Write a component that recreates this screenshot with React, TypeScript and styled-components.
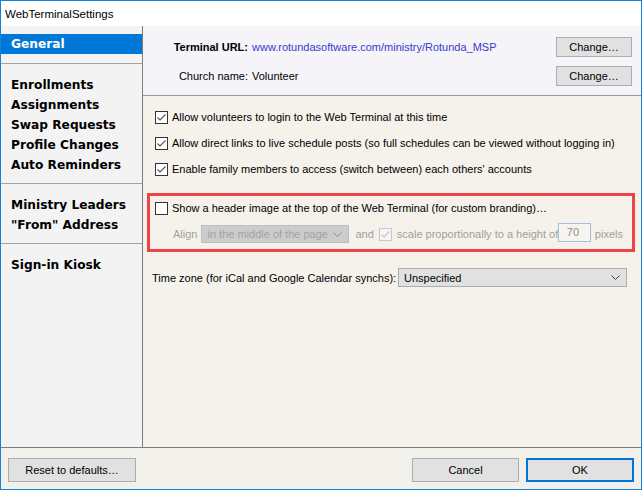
import React from 'react';
import styled, { createGlobalStyle } from 'styled-components';

const Global = createGlobalStyle`
  html, body { margin: 0; padding: 0; background: #ffffff; }
  body { font-family: "Liberation Sans", Arial, sans-serif; font-size: 11px; color: #000; }
  * { box-sizing: border-box; }
`;

const Window = styled.div`
  width: 642px;
  height: 490px;
  border: 1px solid #1a7fd6;
  display: flex;
  flex-direction: column;
  background: #f3f1ec;
`;

const TitleBar = styled.div`
  height: 25px;
  flex: none;
  background: #ffffff;
  display: flex;
  align-items: center;
  padding-left: 4px;
  font-size: 11.5px;
  color: #000;
`;

const Body = styled.div`
  height: 422px;
  flex: none;
  display: flex;
  border-bottom: 1px solid #7d7d7d;
`;

const Sidebar = styled.nav`
  width: 142px;
  flex: none;
  background: #f3f3f3;
  border-right: 1px solid #7d7d7d;
  display: flex;
  flex-direction: column;
`;

const NavGroup = styled.div<{ $first?: boolean; $last?: boolean }>`
  padding: ${p => (p.$first ? '8px 0 9px' : '11px 0 8px')};
  border-bottom: ${p => (p.$last ? 'none' : '1px solid #a3a3a3')};
`;

const NavItem = styled.div<{ $selected?: boolean }>`
  height: 20px;
  line-height: 21px;
  padding-left: 10px;
  font-family: "DejaVu Sans", Verdana, sans-serif;
  font-weight: bold;
  font-size: 12.2px;
  white-space: nowrap;
  background: ${p => (p.$selected ? '#0078d7' : 'transparent')};
  color: ${p => (p.$selected ? '#ffffff' : '#000000')};
`;

const Main = styled.main`
  flex: 1;
  display: flex;
  flex-direction: column;
  min-width: 0;
`;

const InfoSection = styled.section`
  height: 70px;
  flex: none;
  background: #f4f4f9;
  border-bottom: 1px solid #9a9a9a;
  padding: 11px 9px 0 0;
  display: grid;
  grid-template-columns: 105px 1fr 76px;
  grid-auto-rows: 20px;
  column-gap: 4px;
  row-gap: 9px;
  align-items: center;
`;

const InfoLabel = styled.span<{ $bold?: boolean }>`
  text-align: right;
  font-weight: ${p => (p.$bold ? 'bold' : 'normal')};
  white-space: nowrap;
`;

const InfoValue = styled.span<{ $link?: boolean }>`
  color: ${p => (p.$link ? '#3b3bcc' : '#000')};
  white-space: nowrap;
`;

const Button = styled.button<{ $default?: boolean; $w: number; $h: number }>`
  width: ${p => p.$w}px;
  height: ${p => p.$h}px;
  background: #e1e1e1;
  border: ${p => (p.$default ? '2px solid #0078d7' : '1px solid #adadad')};
  font-family: "Liberation Sans", Arial, sans-serif;
  font-size: 11px;
  color: #000;
  padding: 0;
  margin: 0;
`;

const Options = styled.section`
  flex: 1;
  background: #f5f2eb;
  padding: 8px 6px 0 0;
  display: flex;
  flex-direction: column;
`;

const CheckRow = styled.label`
  height: 26px;
  display: flex;
  align-items: center;
  padding-left: 12px;
  gap: 4px;
  white-space: nowrap;
`;

const BoxFrame = styled.div`
  margin: 11px 0 0 4px;
  border: 3px solid #ef4249;
  padding: 0 0 3px 5px;
  display: flex;
  flex-direction: column;
  gap: 2px;
`;

const FrameRow = styled.div<{ $indent?: number }>`
  height: 24px;
  display: flex;
  align-items: center;
  padding-left: ${p => p.$indent ?? 0}px;
  white-space: nowrap;
`;

const Muted = styled.span<{ $ml?: number; $clip?: number }>`
  color: #a0a0a0;
  margin-left: ${p => p.$ml ?? 0}px;
  ${p => (p.$clip ? `width: ${p.$clip}px; overflow: hidden; flex: none;` : '')}
`;

const SelectBox = styled.div<{ $disabled?: boolean; $w: number; $h: number; $ml?: number }>`
  width: ${p => p.$w}px;
  height: ${p => p.$h}px;
  flex: none;
  margin-left: ${p => p.$ml ?? 0}px;
  background: ${p => (p.$disabled ? '#cccccc' : '#e1e1e1')};
  border: 1px solid ${p => (p.$disabled ? '#bfbfbf' : '#adadad')};
  color: ${p => (p.$disabled ? '#a2a2a2' : '#000')};
  display: flex;
  align-items: center;
  justify-content: space-between;
  padding: 0 6px 0 5px;
  white-space: nowrap;
`;

const NumberInput = styled.div`
  width: 33px;
  height: 19px;
  flex: none;
  margin: -4px 0 0 0;
  border: 1px solid #a9bfd8;
  background: #f7f5f0;
  color: #8c8c8c;
  display: flex;
  align-items: center;
  padding-left: 8px;
`;

const TimeZoneRow = styled.div`
  margin-top: 16px;
  height: 19px;
  display: flex;
  align-items: center;
  padding-left: 9px;
`;

const TzLabel = styled.span`
  width: 246px;
  flex: none;
  white-space: nowrap;
`;

const Footer = styled.footer`
  flex: 1;
  display: flex;
  align-items: flex-start;
  padding: 10px 7px 0 7px;
  gap: 7px;
  background: #f2f0ea;
`;

const Spacer = styled.div`
  flex: 1;
`;

const Check: React.FC<{ checked?: boolean; disabled?: boolean; ml?: number }> = ({ checked, disabled, ml }) => (
  <svg width="13" height="13" viewBox="0 0 13 13" style={{ flex: 'none', marginLeft: ml }}>
    <rect x="0.5" y="0.5" width="12" height="12" fill={disabled ? '#f6f6f6' : '#ffffff'} stroke={disabled ? '#c8c8c8' : '#333333'} />
    {checked && (
      <polyline points="2.5,6.5 5,9 10.5,3.5" fill="none" stroke={disabled ? '#c4c4c4' : '#555555'} strokeWidth="1.1" />
    )}
  </svg>
);

const Chevron: React.FC<{ color?: string }> = ({ color = '#444' }) => (
  <svg width="9" height="5" viewBox="0 0 9 5" style={{ flex: 'none' }}>
    <polyline points="0.5,0.5 4.5,4.5 8.5,0.5" fill="none" stroke={color} strokeWidth="1" />
  </svg>
);

export default function App() {
  return (
    <Window>
      <Global />
      <TitleBar>WebTerminalSettings</TitleBar>
      <Body>
        <Sidebar>
          <NavGroup $first>
            <NavItem $selected>General</NavItem>
          </NavGroup>
          <NavGroup>
            <NavItem>Enrollments</NavItem>
            <NavItem>Assignments</NavItem>
            <NavItem>Swap Requests</NavItem>
            <NavItem>Profile Changes</NavItem>
            <NavItem>Auto Reminders</NavItem>
          </NavGroup>
          <NavGroup>
            <NavItem>Ministry Leaders</NavItem>
            <NavItem>"From" Address</NavItem>
          </NavGroup>
          <NavGroup $last>
            <NavItem>Sign-in Kiosk</NavItem>
          </NavGroup>
        </Sidebar>
        <Main>
          <InfoSection>
            <InfoLabel $bold>Terminal URL:</InfoLabel>
            <InfoValue $link>www.rotundasoftware.com/ministry/Rotunda_MSP</InfoValue>
            <Button $w={76} $h={20}>Change…</Button>
            <InfoLabel>Church name:</InfoLabel>
            <InfoValue>Volunteer</InfoValue>
            <Button $w={76} $h={20}>Change…</Button>
          </InfoSection>
          <Options>
            <CheckRow><Check checked />Allow volunteers to login to the Web Terminal at this time</CheckRow>
            <CheckRow><Check checked />Allow direct links to live schedule posts (so full schedules can be viewed without logging in)</CheckRow>
            <CheckRow><Check checked />Enable family members to access (switch between) each others' accounts</CheckRow>
            <BoxFrame>
              <FrameRow>
                <Check />
                <span style={{ marginLeft: 4 }}>Show a header image at the top of the Web Terminal (for custom branding)…</span>
              </FrameRow>
              <FrameRow $indent={18}>
                <Muted>Align</Muted>
                <SelectBox $disabled $w={148} $h={18} $ml={4}>
                  <span>in the middle of the page</span>
                  <Chevron color="#8a8a8a" />
                </SelectBox>
                <Muted $ml={6}>and</Muted>
                <Check checked disabled ml={5} />
                <Muted $ml={5} $clip={161}>scale proportionally to a height of</Muted>
                <NumberInput>70</NumberInput>
                <Muted $ml={4}>pixels</Muted>
              </FrameRow>
            </BoxFrame>
            <TimeZoneRow>
              <TzLabel>Time zone (for iCal and Google Calendar synchs):</TzLabel>
              <SelectBox $w={229} $h={19}>
                <span>Unspecified</span>
                <Chevron />
              </SelectBox>
            </TimeZoneRow>
          </Options>
        </Main>
      </Body>
      <Footer>
        <Button $w={128} $h={24}>Reset to defaults…</Button>
        <Spacer />
        <Button $w={107} $h={24}>Cancel</Button>
        <Button $w={108} $h={24} $default>OK</Button>
      </Footer>
    </Window>
  );
}
